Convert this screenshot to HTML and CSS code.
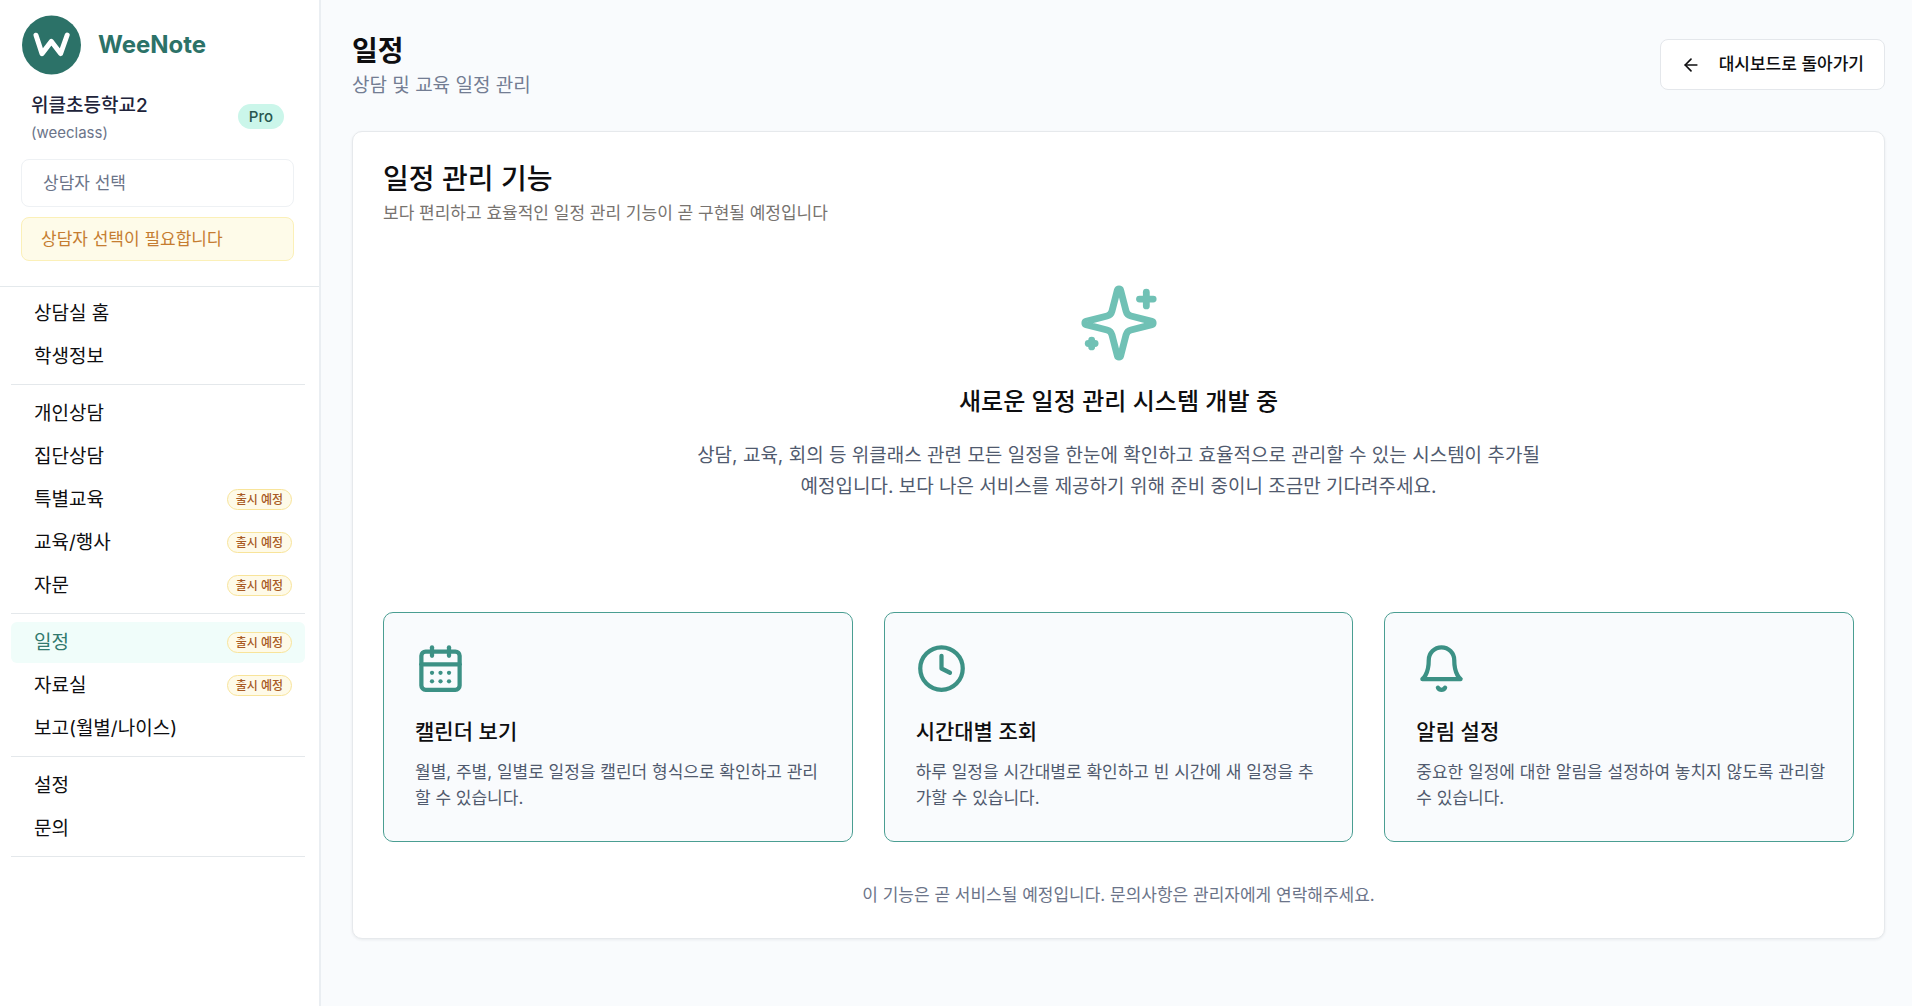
FILE: index.html
```html
<!DOCTYPE html>
<html lang="ko">
<head>
<meta charset="utf-8">
<meta name="viewport" content="width=device-width, initial-scale=1">
<title>WeeNote - 일정</title>
<link rel="stylesheet" href="styles.css">
</head>
<body>
<div class="app">
  <aside class="sidebar">
    <div class="sidebar-top">
      <a class="brand" href="#">
        <svg class="brand-mark" viewBox="0 0 60 60" aria-hidden="true">
          <circle cx="30.5" cy="30" r="29.5" fill="#2c7268"/>
          <path d="M15 20.2 21 38.6 30.4 26.4 39.6 38.6 46.2 20" fill="none" stroke="#fff" stroke-width="5" stroke-linecap="round" stroke-linejoin="round"/>
        </svg>
        <span class="brand-name">WeeNote</span>
      </a>
      <div class="account">
        <div>
          <div class="school">위클초등학교2</div>
          <div class="user-id">(weeclass)</div>
        </div>
        <span class="plan">Pro</span>
      </div>
      <button class="picker" type="button">상담자 선택</button>
      <p class="warning">상담자 선택이 필요합니다</p>
    </div>
    <nav class="nav">
      <ul class="nav-group">
        <li><a class="nav-link" href="#">상담실 홈</a></li>
        <li><a class="nav-link" href="#">학생정보</a></li>
      </ul>
      <ul class="nav-group">
        <li><a class="nav-link" href="#">개인상담</a></li>
        <li><a class="nav-link" href="#">집단상담</a></li>
        <li><a class="nav-link" href="#">특별교육 <span class="badge">출시 예정</span></a></li>
        <li><a class="nav-link" href="#">교육/행사 <span class="badge">출시 예정</span></a></li>
        <li><a class="nav-link" href="#">자문 <span class="badge">출시 예정</span></a></li>
      </ul>
      <ul class="nav-group">
        <li><a class="nav-link active" href="#" aria-current="page">일정 <span class="badge">출시 예정</span></a></li>
        <li><a class="nav-link" href="#">자료실 <span class="badge">출시 예정</span></a></li>
        <li><a class="nav-link" href="#">보고(월별/나이스)</a></li>
      </ul>
      <ul class="nav-group">
        <li><a class="nav-link" href="#">설정</a></li>
        <li><a class="nav-link" href="#">문의</a></li>
      </ul>
    </nav>
  </aside>

  <main class="main">
    <header class="page-header">
      <div>
        <h1 class="page-title">일정</h1>
        <p class="page-subtitle">상담 및 교육 일정 관리</p>
      </div>
      <button class="back" type="button">
        <svg class="back-icon" viewBox="0 0 24 24" aria-hidden="true"><path d="m12 19-7-7 7-7"/><path d="M19 12H5"/></svg>
        대시보드로 돌아가기
      </button>
    </header>

    <section class="panel">
      <h2 class="panel-title">일정 관리 기능</h2>
      <p class="panel-desc">보다 편리하고 효율적인 일정 관리 기능이 곧 구현될 예정입니다</p>

      <div class="hero">
        <svg class="hero-icon" viewBox="0 0 24 24" aria-hidden="true">
          <path d="M9.937 15.5A2 2 0 0 0 8.5 14.063l-6.135-1.582a.5.5 0 0 1 0-.962L8.5 9.936A2 2 0 0 0 9.937 8.5l1.582-6.135a.5.5 0 0 1 .963 0L14.063 8.5A2 2 0 0 0 15.5 9.937l6.135 1.581a.5.5 0 0 1 0 .964L15.5 14.063a2 2 0 0 0-1.437 1.437l-1.582 6.135a.5.5 0 0 1-.963 0z"/>
          <path d="M20 3v4"/><path d="M22 5h-4"/><path d="M4 17v2"/><path d="M5 18H3"/>
        </svg>
        <h3 class="hero-title">새로운 일정 관리 시스템 개발 중</h3>
        <p class="hero-text">상담, 교육, 회의 등 위클래스 관련 모든 일정을 한눈에 확인하고 효율적으로 관리할 수 있는 시스템이 추가될 예정입니다. 보다 나은 서비스를 제공하기 위해 준비 중이니 조금만 기다려주세요.</p>
      </div>

      <div class="features">
        <article class="feature">
          <svg class="feature-icon" viewBox="0 0 24 24" aria-hidden="true">
            <path d="M8 2v4"/><path d="M16 2v4"/><rect width="18" height="18" x="3" y="4" rx="2"/><path d="M3 10h18"/>
            <path d="M8 14h.01"/><path d="M12 14h.01"/><path d="M16 14h.01"/><path d="M8 18h.01"/><path d="M12 18h.01"/><path d="M16 18h.01"/>
          </svg>
          <h4 class="feature-title">캘린더 보기</h4>
          <p class="feature-text">월별, 주별, 일별로 일정을 캘린더 형식으로 확인하고 관리할 수 있습니다.</p>
        </article>
        <article class="feature">
          <svg class="feature-icon" viewBox="0 0 24 24" aria-hidden="true"><circle cx="12" cy="12" r="10"/><path d="M12 6v6l4 2"/></svg>
          <h4 class="feature-title">시간대별 조회</h4>
          <p class="feature-text">하루 일정을 시간대별로 확인하고 빈 시간에 새 일정을 추가할 수 있습니다.</p>
        </article>
        <article class="feature">
          <svg class="feature-icon" viewBox="0 0 24 24" aria-hidden="true"><path d="M6 8a6 6 0 0 1 12 0c0 7 3 9 3 9H3s3-2 3-9"/><path d="M10.3 21a1.94 1.94 0 0 0 3.4 0"/></svg>
          <h4 class="feature-title">알림 설정</h4>
          <p class="feature-text">중요한 일정에 대한 알림을 설정하여 놓치지 않도록 관리할 수 있습니다.</p>
        </article>
      </div>

      <p class="panel-note">이 기능은 곧 서비스될 예정입니다. 문의사항은 관리자에게 연락해주세요.</p>
    </section>
  </main>
</div>
</body>
</html>
```

FILE: styles.css
```css
*,
*::before,
*::after {
  box-sizing: border-box;
}

body {
  margin: 0;
  background: #f9fbfd;
  color: #0e0e10;
  font-family: Inter, "Noto Sans CJK KR", sans-serif;
  font-size: 17px;
  line-height: 26px;
}

h1, h2, h3, h4, p, ul {
  margin: 0;
  padding: 0;
}

button {
  font: inherit;
  color: inherit;
}

.app {
  display: flex;
  min-height: 100vh;
}

/* Sidebar */
.sidebar {
  flex: none;
  width: 321px;
  background: #fff;
  border-right: 2px solid #eaeef2;
}

.sidebar-top {
  display: flex;
  flex-direction: column;
  padding: 15px 25px 25px 21px;
  border-bottom: 1px solid #e4e9ec;
}

.brand {
  display: flex;
  align-items: center;
  gap: 17px;
  color: #2c7268;
  text-decoration: none;
}

.brand-mark {
  width: 60px;
  height: 60px;
}

.brand-name {
  font-size: 24px;
  font-weight: 700;
  line-height: 32px;
}

.account {
  display: flex;
  align-items: center;
  justify-content: space-between;
  padding: 17px 10px 13px;
}

.school {
  font-size: 19px;
  font-weight: 500;
  line-height: 28px;
  color: #20233a;
}

.user-id {
  font-size: 15px;
  line-height: 26px;
  color: #6b7489;
}

.plan {
  margin-bottom: 6px;
  padding: 0 11px;
  border-radius: 13px;
  background: #cbf6ea;
  color: #28574f;
  font-size: 15px;
  font-weight: 500;
  line-height: 25px;
}

.picker {
  padding: 10px 21px;
  border: 1px solid #eef1f4;
  border-radius: 8px;
  background: #fff;
  color: #6b7489;
  text-align: left;
}

.warning {
  margin-top: 10px;
  padding: 8px 19px;
  border: 1px solid #fbf0b8;
  border-radius: 8px;
  background: #fefbe9;
  color: #c57d31;
}

.nav {
  padding: 0 14px 0 11px;
}

.nav-group {
  display: grid;
  gap: 2px;
  padding: 8px 0 7px;
  border-bottom: 1px solid #e4e8eb;
  list-style: none;
}

.nav-group:first-child {
  padding-top: 6px;
}

.nav-link {
  display: flex;
  align-items: center;
  justify-content: space-between;
  height: 41px;
  padding: 0 13px 0 23px;
  border-radius: 6px;
  color: inherit;
  font-size: 19px;
  text-decoration: none;
}

.nav-link.active {
  background: #f0fdfa;
  color: #32796e;
}

.badge {
  padding: 0 8px;
  border: 1px solid #f8e49a;
  border-radius: 11px;
  background: #fefae8;
  color: #a85a24;
  font-size: 12px;
  font-weight: 500;
  line-height: 19px;
}

/* Main column */
.main {
  flex: 1;
  min-width: 0;
  padding: 32px 27px 31px 31px;
}

.page-header {
  display: flex;
  align-items: flex-start;
  justify-content: space-between;
  margin-bottom: 29px;
}

.page-title {
  font-size: 28px;
  font-weight: 700;
  line-height: 38px;
}

.page-subtitle {
  font-size: 19px;
  line-height: 32px;
  color: #737d93;
}

.back {
  display: flex;
  align-items: center;
  gap: 18px;
  margin-top: 7px;
  padding: 12px 20px;
  border: 1px solid #e4e7eb;
  border-radius: 8px;
  background: #fff;
  font-weight: 500;
  line-height: 25px;
}

.back-icon {
  width: 20px;
  height: 20px;
  fill: none;
  stroke: currentColor;
  stroke-width: 2;
  stroke-linecap: round;
  stroke-linejoin: round;
}

.panel {
  padding: 30px;
  border: 1px solid #e6e9ec;
  border-radius: 10px;
  background: #fff;
  box-shadow: 0 1px 3px rgba(15, 23, 42, 0.07);
}

.panel-title {
  font-size: 28px;
  font-weight: 500;
  line-height: 34px;
}

.panel-desc {
  margin-top: 4px;
  color: #77736f;
}

.hero {
  display: flex;
  flex-direction: column;
  align-items: center;
  padding: 56px 0 110px;
  text-align: center;
}

.hero-icon {
  width: 82px;
  height: 82px;
  fill: none;
  stroke: #70c1b5;
  stroke-width: 2;
  stroke-linecap: round;
  stroke-linejoin: round;
}

.hero-title {
  margin-top: 20px;
  font-size: 24px;
  font-weight: 500;
  line-height: 36px;
}

.hero-text {
  max-width: 860px;
  margin-top: 20px;
  font-size: 19px;
  line-height: 31px;
  color: #505a6e;
}

.features {
  display: grid;
  grid-template-columns: repeat(3, 1fr);
  gap: 31px;
}

.feature {
  padding: 30px 26px 30px 31px;
  border: 1px solid #4a9e92;
  border-radius: 10px;
  background: #f9fbfd;
}

.feature-icon {
  display: block;
  width: 51px;
  height: 51px;
  fill: none;
  stroke: #3c9185;
  stroke-width: 2;
  stroke-linecap: round;
  stroke-linejoin: round;
}

.feature-title {
  margin-top: 22px;
  font-size: 21px;
  font-weight: 500;
  line-height: 32px;
}

.feature-text {
  margin-top: 11px;
  color: #505a6e;
}

.panel-note {
  margin-top: 40px;
  text-align: center;
  color: #6b7489;
}
```
